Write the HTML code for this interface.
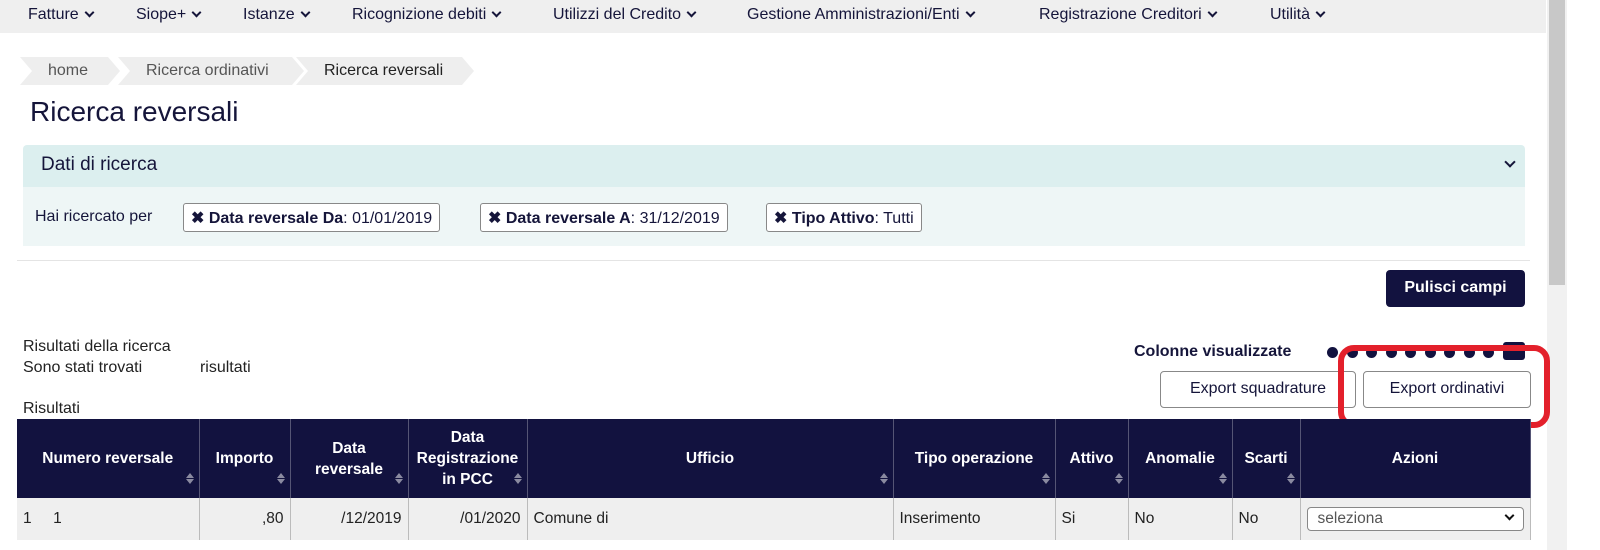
<!DOCTYPE html>
<html><head><meta charset="utf-8"><style>
*{box-sizing:border-box;margin:0;padding:0}
body{width:1600px;height:550px;overflow:hidden;background:#fff;font-family:"Liberation Sans",sans-serif;color:#15153a;position:relative}
.a{position:absolute;white-space:nowrap}
.nav{position:absolute;left:0;top:0;width:1546px;height:33px;background:#efefef}
.nav span{position:absolute;top:6px;font-size:16px;color:#15153a}
.nav span:after{content:"";display:inline-block;width:5px;height:5px;border-right:2px solid #15153a;border-bottom:2px solid #15153a;transform:rotate(45deg);margin-left:7px;position:relative;top:-3px}
.bc{position:absolute;top:57px;height:28px;background:#eeeeee;font-size:16px;color:#555;padding:5px 0 0 28px;clip-path:polygon(0 0,calc(100% - 12px) 0,100% 50%,calc(100% - 12px) 100%,0 100%,12px 50%)}
.chip{position:absolute;top:203px;height:29px;border:1px solid #888;border-radius:3px;background:#fff;font-size:16px;padding:4px 7px;color:#15153a}
.btn{position:absolute;border:1px solid #888;border-radius:4px;background:#fff;font-size:16px;color:#15153a;text-align:center;padding-top:8px}
table{position:absolute;left:17px;top:419px;border-collapse:collapse;font-size:15.5px}
th{background:#12123f;color:#fff;font-weight:bold;height:79px;border-right:1px solid #555575;position:relative;padding:0 4px;line-height:21px}
th:after{content:"";position:absolute;right:5px;bottom:14px;width:0;height:0;border-left:4px solid transparent;border-right:4px solid transparent;border-top:5px solid #8a8aa0}
th:before{content:"";position:absolute;right:5px;bottom:20px;width:0;height:0;border-left:4px solid transparent;border-right:4px solid transparent;border-bottom:5px solid #8a8aa0}
th.n:after,th.n:before{display:none}
td{background:#efefef;height:42px;border-right:1px solid #bbb;padding:0 6px;color:#222}
.dot{position:absolute;top:347px;width:11px;height:11px;border-radius:50%;background:#12123f}
</style></head><body>
<div class="nav">
<span style="left:28px">Fatture</span><span style="left:136px">Siope+</span><span style="left:243px">Istanze</span><span style="left:352px">Ricognizione debiti</span><span style="left:553px">Utilizzi del Credito</span><span style="left:747px">Gestione Amministrazioni/Enti</span><span style="left:1039px">Registrazione Creditori</span><span style="left:1270px">Utilità</span>
</div>
<div style="position:absolute;left:1547px;top:0;width:20px;height:550px;background:#f1f1f1"></div>
<div style="position:absolute;left:1549px;top:0;width:16px;height:285px;background:#c8c8c8"></div>
<div class="bc" style="left:20px;width:100px">home</div>
<div class="bc" style="left:118px;width:186px">Ricerca ordinativi</div>
<div class="bc" style="left:296px;width:178px;color:#222">Ricerca reversali</div>
<div class="a" style="left:30px;top:96px;font-size:28px;color:#15153a">Ricerca reversali</div>
<div style="position:absolute;left:23px;top:145px;width:1502px;height:42px;background:#dcefef;border-radius:4px 4px 0 0"></div>
<div class="a" style="left:41px;top:154px;font-size:19px">Dati di ricerca</div>
<div class="a" style="left:1506px;top:158px;width:8px;height:8px;border-right:2px solid #15153a;border-bottom:2px solid #15153a;transform:rotate(45deg)"></div>
<div style="position:absolute;left:23px;top:187px;width:1502px;height:59px;background:#eef6f6"></div>
<div class="a" style="left:35px;top:208px;font-size:16px">Hai ricercato per</div>
<div class="chip" style="left:183px"><b>✖ Data reversale Da</b>: 01/01/2019</div>
<div class="chip" style="left:480px"><b>✖ Data reversale A</b>: 31/12/2019</div>
<div class="chip" style="left:766px"><b>✖ Tipo Attivo</b>: Tutti</div>
<div style="position:absolute;left:17px;top:260px;width:1513px;height:1px;background:#e4e4e4"></div>
<div class="btn" style="left:1386px;top:270px;width:139px;height:37px;background:#12123f;color:#fff;border-color:#12123f;font-weight:bold">Pulisci campi</div>
<div class="a" style="left:23px;top:338px;font-size:16px;color:#222">Risultati della ricerca</div>
<div class="a" style="left:23px;top:359px;font-size:16px;color:#222">Sono stati trovati &nbsp; &nbsp; &nbsp; &nbsp; &nbsp; &nbsp; risultati</div>
<div class="a" style="left:23px;top:400px;font-size:16px;color:#222">Risultati</div>
<div class="a" style="left:1134px;top:343px;font-size:16px;font-weight:bold">Colonne visualizzate</div>
<div class="dot" style="left:1327px"></div><div class="dot" style="left:1347px"></div><div class="dot" style="left:1366px"></div><div class="dot" style="left:1386px"></div><div class="dot" style="left:1405px"></div><div class="dot" style="left:1425px"></div><div class="dot" style="left:1444px"></div><div class="dot" style="left:1464px"></div><div class="dot" style="left:1483px"></div>
<div style="position:absolute;left:1503px;top:342px;width:22px;height:18px;background:#12123f;border-radius:3px"></div>
<div class="btn" style="left:1160px;top:371px;width:196px;height:37px">Export squadrature</div>
<div class="btn" style="left:1363px;top:371px;width:168px;height:37px">Export ordinativi</div>
<div style="position:absolute;left:1338px;top:345px;width:212px;height:83px;border:6px solid #e3202b;border-radius:16px"></div>
<table>
<tr><th style="width:182px">Numero reversale</th><th style="width:91px">Importo</th><th style="width:118px">Data<br>reversale</th><th style="width:119px">Data<br>Registrazione<br>in PCC</th><th style="width:366px">Ufficio</th><th style="width:162px">Tipo operazione</th><th style="width:73px">Attivo</th><th style="width:104px">Anomalie</th><th style="width:68px">Scarti</th><th class="n" style="width:230px">Azioni</th></tr>
<tr><td>1 &nbsp; &nbsp; 1</td><td style="text-align:right">,80</td><td style="text-align:right">/12/2019</td><td style="text-align:right">/01/2020</td><td>Comune di</td><td>Inserimento</td><td>Si</td><td>No</td><td>No</td><td><div style="border:1px solid #888;border-radius:4px;background:#fff;height:24px;padding:2px 10px;color:#555;position:relative">seleziona<span style="position:absolute;right:10px;top:4px;width:7px;height:7px;border-right:2px solid #111;border-bottom:2px solid #111;transform:rotate(45deg)"></span></div></td></tr>
</table>
</body></html>
